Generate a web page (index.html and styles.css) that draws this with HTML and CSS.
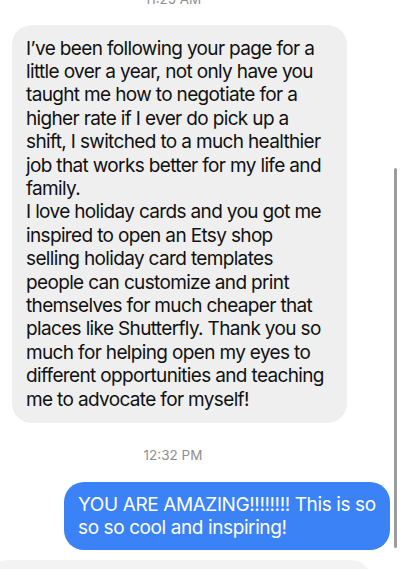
FILE: index.html
```html
<!DOCTYPE html>
<html lang="en">

<head>
  <meta charset="UTF-8" />
  <title>Messages</title>
  <link rel="stylesheet" href="styles.css">
</head>

<body>

  <div class="screen">
    <div class="thread">
      <p class="time time-first">11:25 AM</p>

      <div class="bubble incoming">
        I’ve been following your page for a<br>
        little over a year, not only have you<br>
        taught me how to negotiate for a<br>
        higher rate if I ever do pick up a<br>
        shift, I switched to a much healthier<br>
        job that works better for my life and<br>
        family.<br>
        I love holiday cards and you got me<br>
        inspired to open an Etsy shop<br>
        selling holiday card templates<br>
        people can customize and print<br>
        themselves for much cheaper that<br>
        places like Shutterfly. Thank you so<br>
        much for helping open my eyes to<br>
        different opportunities and teaching<br>
        me to advocate for myself!
      </div>

      <p class="time">12:32 PM</p>

      <div class="bubble outgoing">
        YOU ARE AMAZING!!!!!!!! This is so<br>
        so so cool and inspiring!
      </div>

      <div class="bubble incoming next"></div>
    </div>

    <div class="scrollbar"></div>
  </div>

</body>
</html>
```

FILE: styles.css
```css
body {
  margin: 0;
  background: #fff;
  font-family: Inter, 'Liberation Sans', sans-serif;
  color: #111;
}

.screen {
  position: relative;
  width: 400px;
  height: 569px;
  overflow: hidden;
}

.thread {
  display: flex;
  flex-direction: column;
}

.time {
  width: 346px;
  margin: 24px 0 0;
  font-size: 13.5px;
  line-height: 16px;
  text-align: center;
  color: #8e8e93;
}

.time-first {
  margin-top: -9px;
}

.bubble {
  box-sizing: border-box;
  padding: 11.5px 10px 11.5px 14px;
  border-radius: 20px;
  font-size: 19px;
  line-height: 23.4px;
  letter-spacing: -0.65px;
  white-space: nowrap;
}

.incoming {
  width: 335px;
  margin: 18px 0 0 12px;
  background: #efefef;
}

.outgoing {
  width: 326px;
  margin: 19px 10px 0 auto;
  padding: 11px 8px 11px 14px;
  background: #3a82f6;
  color: #fff;
  letter-spacing: -0.4px;
}

.next {
  width: 383px;
  height: 40px;
  margin: 10px 0 0 -12px;
  padding: 0;
  background: #f3f3f3;
}

.scrollbar {
  position: absolute;
  right: 3px;
  top: 168px;
  width: 3px;
  height: 380px;
  border-radius: 2px;
  background: #9c9c9c;
}
```
